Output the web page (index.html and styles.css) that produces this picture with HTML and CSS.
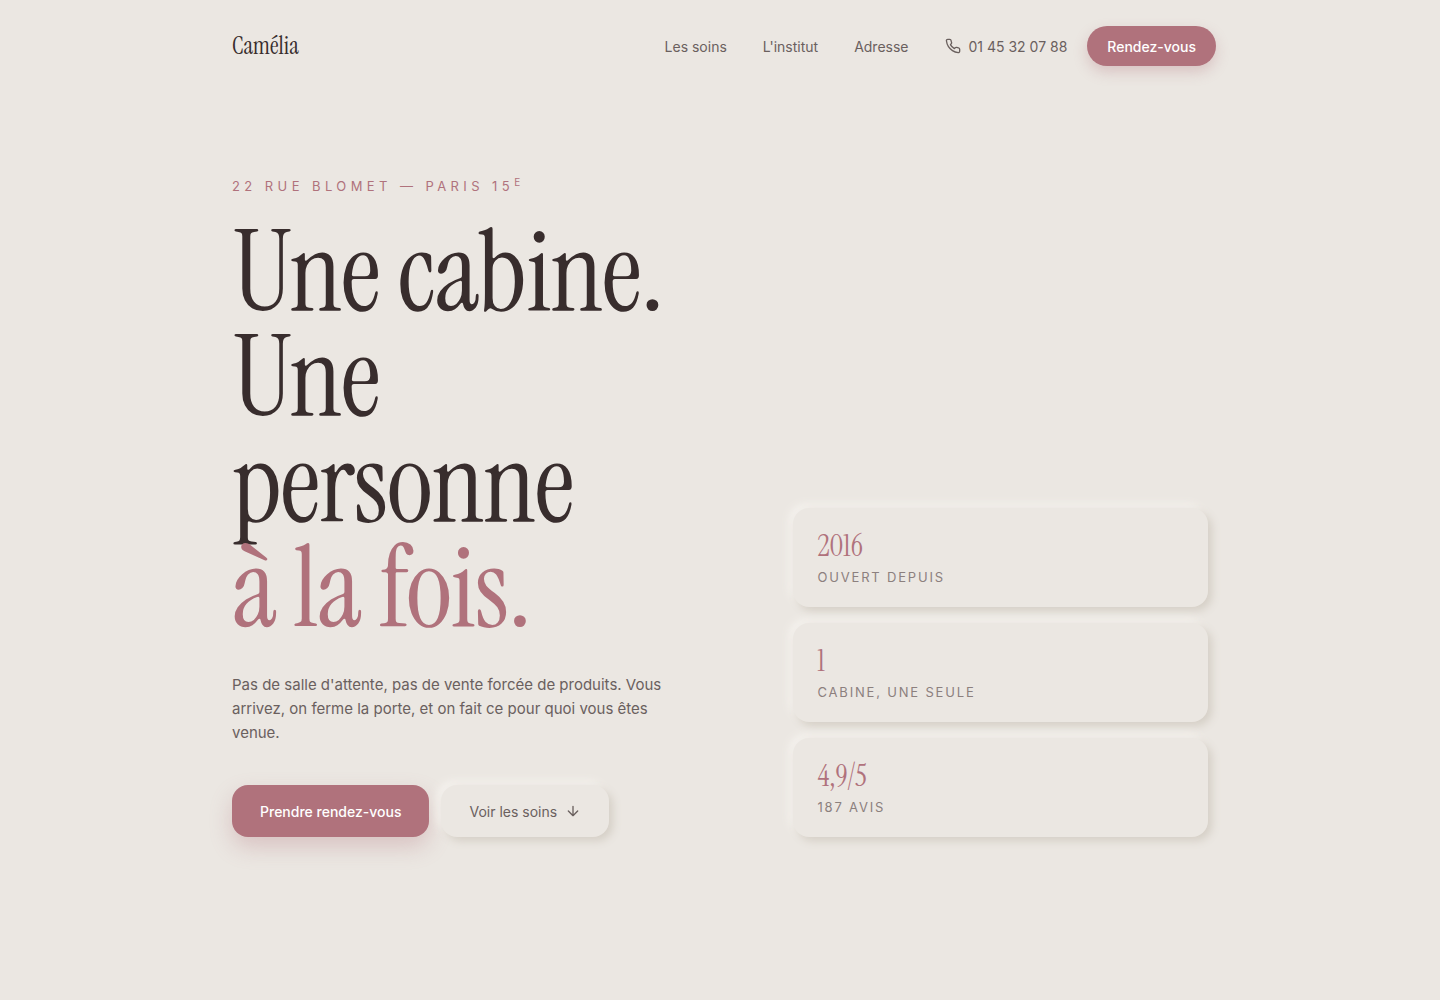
FILE: index.html
```html
<!DOCTYPE html>
<html lang="fr">
<head>
    <meta charset="UTF-8">
    <meta name="viewport" content="width=device-width, initial-scale=1.0">
    <title>Camélia</title>
    <link rel="stylesheet" href="styles.css">
</head>
<body>

    <header class="header">
        <a class="logo" href="#">Camélia</a>
        <nav class="nav">
            <a href="#soins">Les soins</a>
            <a href="#institut">L'institut</a>
            <a href="#adresse">Adresse</a>
            <a class="phone" href="tel:+33145320788">
                <svg width="16" height="16" viewBox="0 0 24 24" fill="none" stroke="currentColor" stroke-width="2" stroke-linecap="round" stroke-linejoin="round" aria-hidden="true">
                    <path d="M22 16.92v3a2 2 0 0 1-2.18 2 19.79 19.79 0 0 1-8.63-3.07 19.5 19.5 0 0 1-6-6 19.79 19.79 0 0 1-3.07-8.67A2 2 0 0 1 4.11 2h3a2 2 0 0 1 2 1.72 12.84 12.84 0 0 0 .7 2.81 2 2 0 0 1-.45 2.11L8.09 9.91a16 16 0 0 0 6 6l1.27-1.27a2 2 0 0 1 2.11-.45 12.84 12.84 0 0 0 2.81.7A2 2 0 0 1 22 16.92z"/>
                </svg>
                01 45 32 07 88
            </a>
        </nav>
        <button class="btn-nav" type="button">Rendez-vous</button>
    </header>

    <main class="hero">
        <section class="intro">
            <p class="eyebrow">22 rue Blomet — Paris 15<sup>e</sup></p>
            <h1 class="title">
                Une cabine.<br>
                Une personne
                <span>à la fois.</span>
            </h1>
            <p class="text">Pas de salle d'attente, pas de vente forcée de produits. Vous arrivez, on ferme la porte, et on fait ce pour quoi vous êtes venue.</p>
            <div class="actions">
                <button class="btn btn-primary" type="button">Prendre rendez-vous</button>
                <a class="btn btn-soft" href="#soins">
                    Voir les soins
                    <svg width="16" height="16" viewBox="0 0 24 24" fill="none" stroke="currentColor" stroke-width="2" stroke-linecap="round" stroke-linejoin="round" aria-hidden="true">
                        <path d="M12 5v14M19 12l-7 7-7-7"/>
                    </svg>
                </a>
            </div>
        </section>

        <dl class="stats">
            <div class="stat">
                <dt>Ouvert depuis</dt>
                <dd>2016</dd>
            </div>
            <div class="stat">
                <dt>Cabine, une seule</dt>
                <dd>1</dd>
            </div>
            <div class="stat">
                <dt>187 avis</dt>
                <dd>4,9/5</dd>
            </div>
        </dl>
    </main>

</body>
</html>
```
FILE: styles.css
```css
:root{
    --bg: #ebe7e2;
    --ink: #382d2d;
    --muted: #6a605e;
    --soft: #8c807e;
    --rose: #b0727c;
    --serif: "Instrument Serif", "Liberation Serif", serif;
    --raised: 4px 4px 8px #d5cfc6, -4px -4px 8px #f5f2ee;
}
*{
    margin: 0;
    padding: 0;
    box-sizing: border-box;
}
body{
    min-height: 100vh;
    background: var(--bg);
    color: var(--ink);
    font-family: Inter, sans-serif;
    font-size: 14px;
}
a{
    color: inherit;
    text-decoration: none;
}
button{
    border: 0;
    font: inherit;
    cursor: pointer;
}

/* header */
.header{
    max-width: 1024px;
    margin: 0 auto;
    padding: 26px 16px 26px 24px;
    display: flex;
    align-items: center;
    gap: 20px;
}
.logo{
    margin-right: auto;
    font-family: var(--serif);
    font-size: 24px;
    line-height: 32px;
}
.nav{
    display: flex;
    align-items: center;
    gap: 36px;
    color: var(--muted);
}
.phone{
    display: flex;
    align-items: center;
    gap: 8px;
}
.btn-nav{
    height: 40px;
    padding: 0 20px;
    border-radius: 20px;
    background: var(--rose);
    color: #fff;
    font-weight: 500;
    box-shadow: 0 6px 14px rgba(176, 114, 124, .3);
}

/* hero */
.hero{
    max-width: 1024px;
    margin: 0 auto;
    padding: 84px 24px;
    display: grid;
    grid-template-columns: 1.2fr 1fr;
    align-items: end;
    gap: 64px;
}
.eyebrow{
    margin-bottom: 24px;
    color: var(--rose);
    font-size: 13px;
    line-height: 20px;
    letter-spacing: .34em;
    text-transform: uppercase;
}
.eyebrow sup{
    font-size: 10px;
    line-height: 0;
}
.title{
    margin-bottom: 32px;
    font-family: var(--serif);
    font-size: 112px;
    font-weight: 400;
    line-height: .94;
    letter-spacing: -.01em;
}
.title span{
    display: block;
    color: var(--rose);
}
.text{
    max-width: 440px;
    margin-bottom: 40px;
    color: var(--muted);
    font-size: 15px;
    line-height: 24px;
}
.actions{
    display: flex;
    gap: 12px;
}
.btn{
    height: 52px;
    padding: 0 28px;
    border-radius: 16px;
    display: inline-flex;
    align-items: center;
    gap: 8px;
}
.btn-primary{
    background: var(--rose);
    color: #fff;
    font-weight: 500;
    box-shadow: 0 10px 22px rgba(176, 114, 124, .3);
}
.btn-soft{
    background: var(--bg);
    color: var(--muted);
    box-shadow: var(--raised);
}

/* figures */
.stats{
    display: grid;
    gap: 16px;
}
.stat{
    padding: 20px 24px;
    border-radius: 16px;
    background: var(--bg);
    box-shadow: var(--raised);
    display: flex;
    flex-direction: column-reverse;
    gap: 4px;
}
.stat dt{
    color: var(--soft);
    font-size: 13px;
    line-height: 19px;
    letter-spacing: .14em;
    text-transform: uppercase;
}
.stat dd{
    color: var(--rose);
    font-family: var(--serif);
    font-size: 30px;
    line-height: 36px;
}

@media (max-width: 800px){
    .nav{
        display: none;
    }
    .hero{
        grid-template-columns: 1fr;
    }
    .title{
        font-size: 72px;
    }
}
```
